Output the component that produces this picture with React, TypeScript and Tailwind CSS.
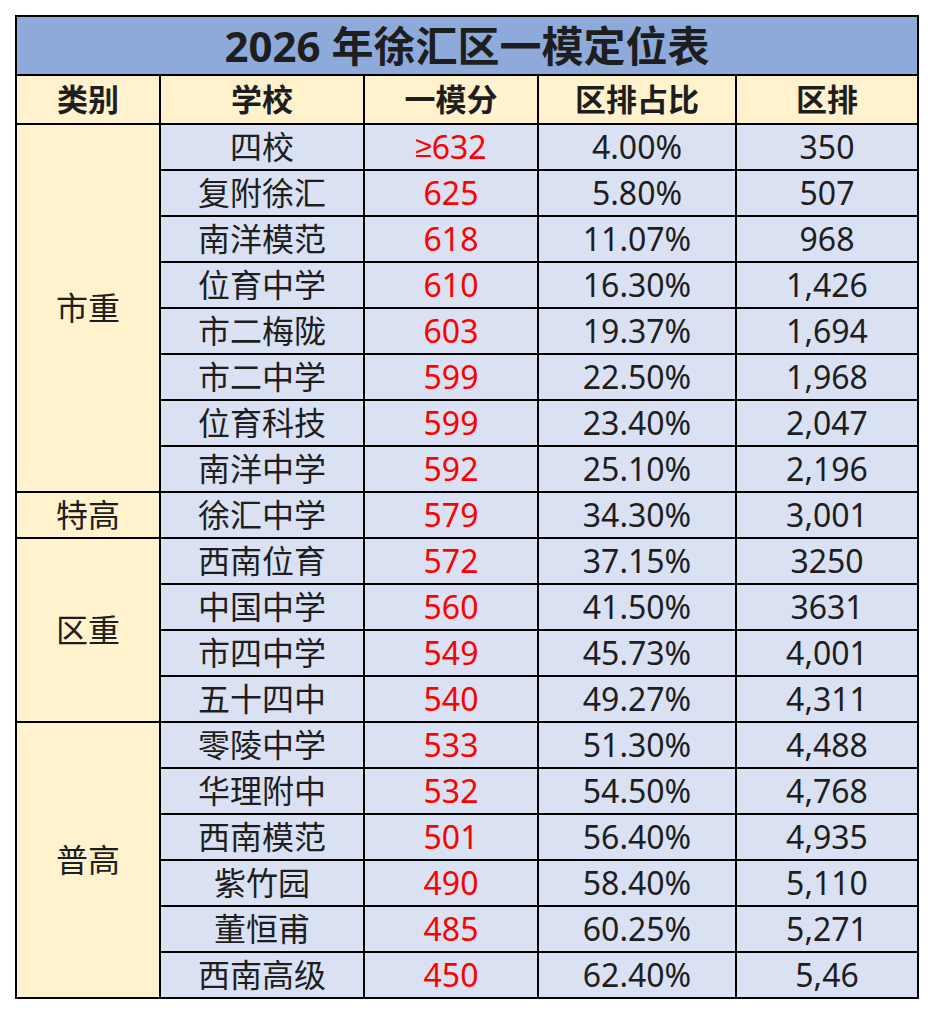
const rows = [
  { school: "四校", score: "≥632", pct: "4.00%", rank: "350" },
  { school: "复附徐汇", score: "625", pct: "5.80%", rank: "507" },
  { school: "南洋模范", score: "618", pct: "11.07%", rank: "968" },
  { school: "位育中学", score: "610", pct: "16.30%", rank: "1,426" },
  { school: "市二梅陇", score: "603", pct: "19.37%", rank: "1,694" },
  { school: "市二中学", score: "599", pct: "22.50%", rank: "1,968" },
  { school: "位育科技", score: "599", pct: "23.40%", rank: "2,047" },
  { school: "南洋中学", score: "592", pct: "25.10%", rank: "2,196" },
  { school: "徐汇中学", score: "579", pct: "34.30%", rank: "3,001" },
  { school: "西南位育", score: "572", pct: "37.15%", rank: "3250" },
  { school: "中国中学", score: "560", pct: "41.50%", rank: "3631" },
  { school: "市四中学", score: "549", pct: "45.73%", rank: "4,001" },
  { school: "五十四中", score: "540", pct: "49.27%", rank: "4,311" },
  { school: "零陵中学", score: "533", pct: "51.30%", rank: "4,488" },
  { school: "华理附中", score: "532", pct: "54.50%", rank: "4,768" },
  { school: "西南模范", score: "501", pct: "56.40%", rank: "4,935" },
  { school: "紫竹园", score: "490", pct: "58.40%", rank: "5,110" },
  { school: "董恒甫", score: "485", pct: "60.25%", rank: "5,271" },
  { school: "西南高级", score: "450", pct: "62.40%", rank: "5,46" },
];

// category label keyed by first row index
const groups: Record<number, { label: string; span: string }> = {
  0: { label: "市重", span: "row-span-8" },
  8: { label: "特高", span: "row-span-1" },
  9: { label: "区重", span: "row-span-4" },
  13: { label: "普高", span: "row-span-6" },
};

const headers = ["类别", "学校", "一模分", "区排占比", "区排"];

const cell = "flex items-center justify-center leading-none";

function Score({ value }: { value: string }) {
  if (value.startsWith("≥")) {
    return (
      <>
        <span className="font-['DejaVu_Sans',sans-serif] text-[30px] font-light">≥</span>
        {value.slice(1)}
      </>
    );
  }
  return <>{value}</>;
}

export default function App() {
  return (
    <div className="min-h-screen bg-white pt-[15px] pl-[15px] font-['Noto_Sans','Noto_Sans_CJK_SC',sans-serif] text-[#1e1e1e]">
      <div className="grid w-fit grid-cols-[142px_202px_172px_196px_180px] grid-rows-[57px_47px_repeat(19,44px)] gap-[2px] bg-black p-[2px]">
        {/* Title */}
        <div className={`${cell} col-span-5 bg-[#8eaadb] text-[42px] font-bold`}>
          2026 年徐汇区一模定位表
        </div>

        {/* Header */}
        {headers.map((h) => (
          <div key={h} className={`${cell} bg-[#fff2cc] text-[31px] font-bold`}>
            {h}
          </div>
        ))}

        {/* Rows */}
        {rows.map((r, i) => (
          <div key={r.school} className="contents">
            {groups[i] && (
              <div className={`${cell} ${groups[i].span} bg-[#fff2cc] text-[32px]`}>
                {groups[i].label}
              </div>
            )}
            <div className={`${cell} bg-[#d9e1f2] text-[32px]`}>{r.school}</div>
            <div className={`${cell} bg-[#d9e1f2] text-[32px] text-[#ff0000]`}>
              <Score value={r.score} />
            </div>
            <div className={`${cell} bg-[#d9e1f2] text-[32px]`}>{r.pct}</div>
            <div className={`${cell} bg-[#d9e1f2] text-[32px]`}>{r.rank}</div>
          </div>
        ))}
      </div>
    </div>
  );
}
